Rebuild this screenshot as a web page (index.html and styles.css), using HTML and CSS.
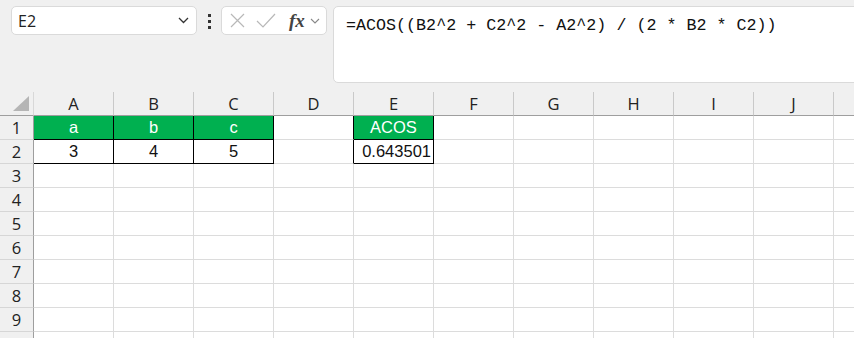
FILE: index.html
```html
<!DOCTYPE html>
<html lang="en">
<head>
    <meta charset="UTF-8">
    <title>ACOS</title>
    <link rel="stylesheet" href="styles.css">
</head>
<body>
    <div class="toolbar">
        <div class="namebox">
            <span>E2</span>
            <svg class="chev" width="11" height="7" viewBox="0 0 11 7"><path d="M1 1l4.5 4.5L10 1" fill="none" stroke="#333" stroke-width="1.3"/></svg>
        </div>
        <div class="grip"><i></i><i></i><i></i></div>
        <div class="fbuttons">
            <svg width="15" height="15" viewBox="0 0 15 15"><path d="M1 1l13 13M14 1L1 14" stroke="#b8b8b8" stroke-width="1.2"/></svg>
            <svg width="20" height="15" viewBox="0 0 20 15"><path d="M1 8l6 6L19 1" fill="none" stroke="#b8b8b8" stroke-width="1.2"/></svg>
            <span class="fx">fx</span>
            <svg width="10" height="6" viewBox="0 0 10 6"><path d="M1 1l4 4 4-4" fill="none" stroke="#888" stroke-width="1.1"/></svg>
        </div>
        <div class="formula">=ACOS((B2^2 + C2^2 - A2^2) / (2 * B2 * C2))</div>
    </div>

    <div class="sheet">
        <div class="h corner"><svg width="17" height="16" viewBox="0 0 17 16"><path d="M0 15H16V0Z" fill="#b5b5b5"/></svg></div>
        <div class="h">A</div><div class="h">B</div><div class="h">C</div><div class="h">D</div><div class="h">E</div>
        <div class="h">F</div><div class="h">G</div><div class="h">H</div><div class="h">I</div><div class="h">J</div><div class="h"></div>

        <div class="r">1</div>
        <div class="c green box">a</div><div class="c green box">b</div><div class="c green box">c</div><div class="c edge"></div>
        <div class="c green box">ACOS</div>
        <div class="c"></div><div class="c"></div><div class="c"></div><div class="c"></div><div class="c"></div><div class="c"></div>

        <div class="r">2</div>
        <div class="c box">3</div><div class="c box">4</div><div class="c box">5</div><div class="c edge"></div>
        <div class="c box num">0.643501</div>
        <div class="c"></div><div class="c"></div><div class="c"></div><div class="c"></div><div class="c"></div><div class="c"></div>
    </div>

    <script>
        // empty rows 3..10 (row 10 is only a sliver at the bottom)
        const sheet = document.querySelector(".sheet");
        for (let row = 3; row <= 10; row++) {
            let head = document.createElement("div");
            head.className = "r";
            head.innerText = row < 10 ? row : "";
            sheet.appendChild(head);
            for (let col = 0; col < 11; col++) {
                let cell = document.createElement("div");
                cell.className = "c";
                sheet.appendChild(cell);
            }
        }
    </script>
</body>
</html>
```

FILE: styles.css
```css
body {
    margin: 0;
    background-color: #f0f0f0;
    font-family: 'Open Sans', 'Liberation Sans', sans-serif;
    color: #222;
    overflow: hidden;
}

.toolbar {
    display: flex;
    align-items: flex-start;
    height: 92px;
    padding: 6px 0 0 11px;
    box-sizing: border-box;
}

.namebox {
    display: flex;
    align-items: center;
    justify-content: space-between;
    width: 186px;
    height: 29px;
    box-sizing: border-box;
    padding: 0 7px 0 6px;
    background-color: #fff;
    border: 1px solid #dadada;
    border-radius: 5px;
    font-size: 16px;
}

.grip {
    display: flex;
    flex-direction: column;
    gap: 3px;
    margin: 8px 10px 0 11px;
}

.grip i {
    display: block;
    width: 3px;
    height: 3px;
    background-color: #333;
}

.fbuttons {
    display: flex;
    align-items: center;
    width: 106px;
    height: 29px;
    box-sizing: border-box;
    padding: 0 0 0 8px;
    background-color: #fff;
    border: 1px solid #dadada;
    border-radius: 5px;
}

.fbuttons svg:nth-child(2) {
    margin-left: 11px;
}

.fx {
    margin-left: 13px;
    margin-right: 5px;
    font-family: 'Liberation Serif', serif;
    font-style: italic;
    font-weight: bold;
    font-size: 19px;
    color: #444;
    line-height: 1;
}

.formula {
    flex: 1;
    height: 77px;
    margin-left: 6px;
    margin-right: -12px;
    box-sizing: border-box;
    padding: 8px 0 0 12px;
    background-color: #fff;
    border: 1px solid #dadada;
    border-radius: 5px;
    font-family: 'Liberation Mono', monospace;
    font-size: 16.7px;
    line-height: 22px;
    color: #111;
    white-space: pre;
}

.sheet {
    display: grid;
    grid-template-columns: 34px repeat(11, 80px);
    grid-auto-rows: 24px;
    height: 246px;
    width: 854px;
    overflow: hidden;
    background-color: #fff;
}

.h {
    display: flex;
    align-items: center;
    justify-content: center;
    background-color: #f0f0f0;
    border-right: 1px solid #c9c9c9;
    border-bottom: 1px solid #9e9e9e;
    font-size: 16.5px;
    color: #222;
}

.corner {
    justify-content: flex-end;
    align-items: flex-end;
    border-right-color: #d8d8d8;
    padding: 0 3px 3px 0;
}

.r {
    display: flex;
    align-items: center;
    justify-content: center;
    background-color: #f0f0f0;
    border-right: 1px solid #9e9e9e;
    border-bottom: 1px solid #d6d6d6;
    font-size: 16.5px;
    color: #222;
}

.c {
    display: flex;
    align-items: center;
    justify-content: center;
    border-right: 1px solid #dcdcdc;
    border-bottom: 1px solid #dcdcdc;
    font-family: 'Liberation Sans', sans-serif;
    font-size: 16.5px;
    color: #111;
}

.green {
    background-color: #00b050;
    color: #fff;
}

.box {
    border-right-color: #000;
    border-bottom-color: #000;
}

.edge {
    border-right-color: #000;
}

.num {
    justify-content: flex-end;
    padding-right: 2px;
}
```
